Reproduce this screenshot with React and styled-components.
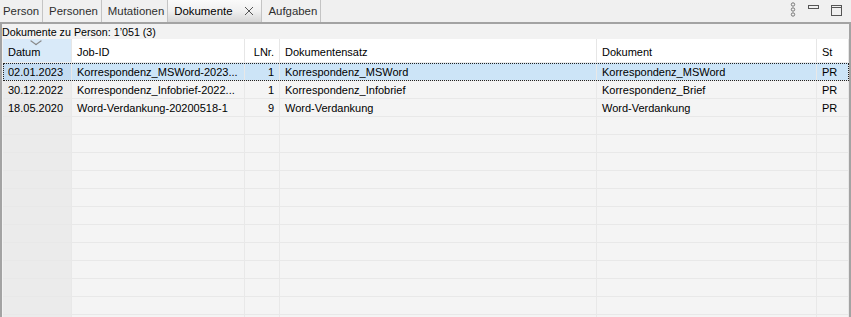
import React from 'react';
import styled, { createGlobalStyle } from 'styled-components';

const GlobalStyle = createGlobalStyle`
  body {
    margin: 0;
    font-family: "Liberation Sans", Arial, sans-serif;
    background: #f0f0f0;
  }
`;

const tabs = [
  { label: 'Person' },
  { label: 'Personen' },
  { label: 'Mutationen' },
  { label: 'Dokumente', active: true },
  { label: 'Aufgaben' },
];

const columns = [
  { key: 'datum', title: 'Datum' },
  { key: 'job', title: 'Job-ID' },
  { key: 'lnr', title: 'LNr.', right: true },
  { key: 'satz', title: 'Dokumentensatz' },
  { key: 'dok', title: 'Dokument' },
  { key: 'st', title: 'St' },
];

const rows = [
  {
    datum: '02.01.2023',
    job: 'Korrespondenz_MSWord-2023...',
    lnr: '1',
    satz: 'Korrespondenz_MSWord',
    dok: 'Korrespondenz_MSWord',
    st: 'PR',
  },
  {
    datum: '30.12.2022',
    job: 'Korrespondenz_Infobrief-2022...',
    lnr: '1',
    satz: 'Korrespondenz_Infobrief',
    dok: 'Korrespondenz_Brief',
    st: 'PR',
  },
  {
    datum: '18.05.2020',
    job: 'Word-Verdankung-20200518-1',
    lnr: '9',
    satz: 'Word-Verdankung',
    dok: 'Word-Verdankung',
    st: 'PR',
  },
];

const GRID = '69px 173px 35px 317px 220px 1fr';

export default function App() {
  const empty = Array.from({ length: 12 });
  return (
    <>
      <GlobalStyle />
      <Wrap>
        <TabBar>
          {tabs.map((t, i) => (
            <Tab key={t.label} $active={t.active} $first={i === 0}>
              {t.label}
              {t.active && (
                <svg width="10" height="10" viewBox="0 0 10 10">
                  <path d="M1 1 L9 9 M9 1 L1 9" stroke="#555" strokeWidth="1" fill="none" />
                </svg>
              )}
            </Tab>
          ))}
          <Tools>
            <svg width="6" height="16" viewBox="0 0 6 16">
              <circle cx="3" cy="3.5" r="1.7" fill="none" stroke="#777" strokeWidth="1" />
              <circle cx="3" cy="8.5" r="1.7" fill="none" stroke="#777" strokeWidth="1" />
              <circle cx="3" cy="13.5" r="1.7" fill="none" stroke="#777" strokeWidth="1" />
            </svg>
            <svg width="11" height="16" viewBox="0 0 11 16">
              <rect x="0.5" y="4.5" width="10" height="3" fill="none" stroke="#555" />
            </svg>
            <svg width="11" height="16" viewBox="0 0 11 16">
              <rect x="0.5" y="4.5" width="10" height="10" fill="none" stroke="#555" />
              <line x1="0" y1="6.5" x2="11" y2="6.5" stroke="#555" />
            </svg>
          </Tools>
        </TabBar>
        <Panel>
          <Caption>Dokumente zu Person: 1’051 (3)</Caption>
          <Table>
            <HeadRow>
              {columns.map((c, i) => (
                <HeadCell key={c.key} $sorted={i === 0} $right={c.right}>
                  {i === 0 && <SortMark />}
                  {c.title}
                </HeadCell>
              ))}
            </HeadRow>
            {rows.map((r, ri) => (
              <Row key={ri} $selected={ri === 0}>
                {columns.map((c, i) => (
                  <Cell key={c.key} $first={i === 0} $right={c.right} $selected={ri === 0}>
                    {r[c.key]}
                  </Cell>
                ))}
              </Row>
            ))}
            {empty.map((_, ri) => (
              <Row key={'e' + ri}>
                {columns.map((c, i) => (
                  <Cell key={c.key} $first={i === 0} />
                ))}
              </Row>
            ))}
          </Table>
        </Panel>
      </Wrap>
    </>
  );
}

const Wrap = styled.div`
  width: 851px;
  height: 317px;
  display: flex;
  flex-direction: column;
  overflow: hidden;
  background: #f0f0f0;
`;

const TabBar = styled.div`
  height: 22px;
  display: flex;
  align-items: stretch;
  background: #f0f0f0;
  flex-shrink: 0;
`;

const Tab = styled.div`
  display: flex;
  align-items: center;
  gap: 12px;
  padding: 0 ${(p) => (p.$active ? '7px' : '3px')} 0 ${(p) => (p.$first ? '3px' : '6px')};
  font-family: "Liberation Sans", Arial, sans-serif;
  font-size: 11.4px;
  color: ${(p) => (p.$active ? '#000' : '#2e2e2e')};
  border-right: 1px solid #c4c4c4;
  background: ${(p) =>
    p.$active ? 'linear-gradient(#fafafa, #f0f0f0 50%, #d6d6d6)' : '#f0f0f0'};
`;

const Tools = styled.div`
  margin-left: auto;
  display: flex;
  align-items: flex-start;
  padding-top: 1px;
  gap: 12px;
  padding-right: 9px;
`;

const Panel = styled.div`
  flex: 1;
  display: flex;
  flex-direction: column;
  border: 2px solid #a3a3a3;
  border-bottom: none;
  background: #f2f2f2;
  min-height: 0;
`;

const Caption = styled.div`
  height: 15px;
  line-height: 17px;
  font-size: 10.7px;
  color: #000;
  padding-left: 0;
  flex-shrink: 0;
`;

const Table = styled.div`
  flex: 1;
  overflow: hidden;
  padding-left: 1px;
`;

const HeadRow = styled.div`
  display: grid;
  grid-template-columns: ${GRID};
  height: 23px;
  background: #fff;
  border-bottom: 1px solid #ececec;
`;

const HeadCell = styled.div`
  position: relative;
  display: flex;
  align-items: center;
  justify-content: ${(p) => (p.$right ? 'flex-end' : 'flex-start')};
  padding: 2px 5px 0;
  font-size: 11px;
  color: #000;
  border-right: 1px solid #e6e6e6;
  background: ${(p) => (p.$sorted ? '#d9eaf9' : '#fff')};
`;

const SortMark = styled.span`
  position: absolute;
  top: -1px;
  left: 30px;
  width: 5px;
  height: 5px;
  border-right: 1px solid #8a8a8a;
  border-bottom: 1px solid #8a8a8a;
  transform: scaleX(1.4) rotate(45deg);
`;

const Row = styled.div`
  display: grid;
  grid-template-columns: ${GRID};
  height: 18px;
  box-sizing: border-box;
  outline: ${(p) => (p.$selected ? '1px dotted #222' : 'none')};
  outline-offset: -1px;
`;

const Cell = styled.div`
  box-sizing: border-box;
  padding: 0 5px;
  font-size: 11px;
  line-height: 18px;
  color: #000;
  white-space: nowrap;
  overflow: hidden;
  text-align: ${(p) => (p.$right ? 'right' : 'left')};
  border-right: 1px solid #e8e8e8;
  border-bottom: 1px solid #e8e8e8;
  background: ${(p) =>
    p.$selected ? (p.$first ? '#c4dcf2' : '#cce4f7') : p.$first ? '#ebebeb' : '#f4f4f4'};
`;
